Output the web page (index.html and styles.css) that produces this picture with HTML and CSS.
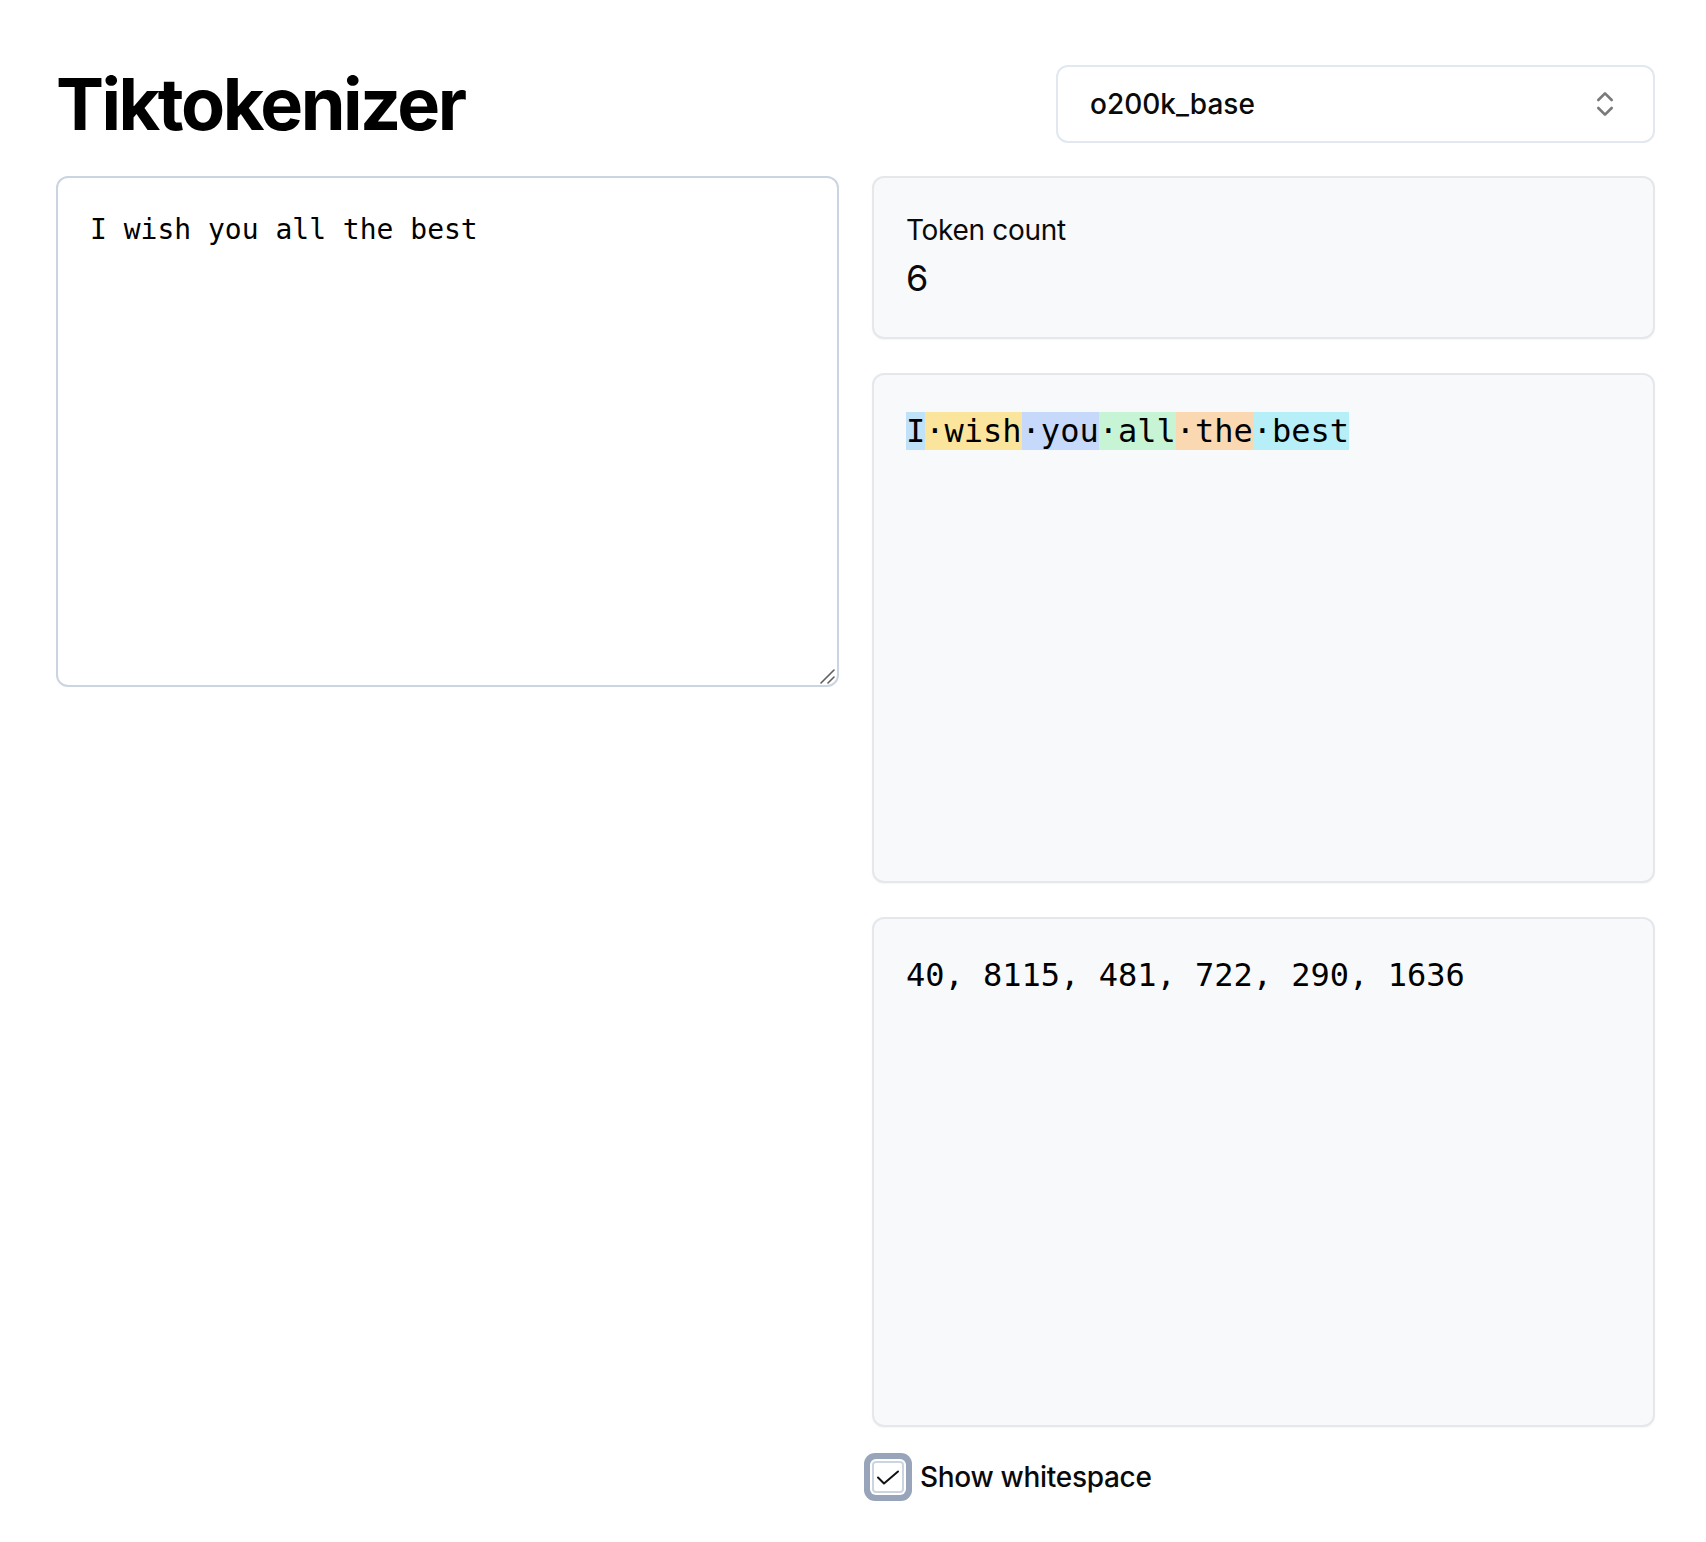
FILE: index.html
```html
<!DOCTYPE html>
<html lang="en">
<head>
<meta charset="utf-8">
<title>Tiktokenizer</title>
<link rel="stylesheet" href="styles.css">
</head>
<body>
<main class="page">
  <header class="header">
    <h1 class="title">Tiktokenizer</h1>
    <button class="select" type="button">
      <span class="select-value">o200k_base</span>
      <svg class="select-icon" viewBox="0 0 24 24" width="32" height="32" fill="none" stroke="currentColor" stroke-width="2" stroke-linecap="round" stroke-linejoin="round"><path d="m7 15 5 5 5-5"/><path d="m7 9 5-5 5 5"/></svg>
    </button>
  </header>
  <section class="grid">
    <div class="left">
      <textarea class="input" spellcheck="false">I wish you all the best</textarea>
      <svg class="grip" viewBox="0 0 16 16" width="16" height="16" fill="none" stroke="#5f5f5f" stroke-width="1.6" stroke-linecap="round"><path d="M2 15 L15 2"/><path d="M9 15 L15 9"/></svg>
    </div>
    <div class="right">
      <div class="panel count-panel">
        <div class="count-label">Token count</div>
        <div class="count-value">6</div>
      </div>
      <div class="panel tall mono"><span class="tk t1">I</span><span class="tk t2">·wish</span><span class="tk t3">·you</span><span class="tk t4">·all</span><span class="tk t5">·the</span><span class="tk t6">·best</span></div>
      <div class="panel tall mono">40, 8115, 481, 722, 290, 1636</div>
      <label class="check-row">
        <span class="checkbox"><svg viewBox="0 0 28 28" width="28" height="28" fill="none" stroke="#111" stroke-width="2" stroke-linecap="round" stroke-linejoin="round"><path d="M4 14.5 L10 20.5 L24 8.5"/></svg></span>
        <span class="check-label">Show whitespace</span>
      </label>
    </div>
  </section>
</main>
</body>
</html>
```

FILE: styles.css
```css
* { box-sizing: border-box; }
html, body { margin: 0; padding: 0; background: #fff; }
body {
  font-family: Inter, "Noto Sans", sans-serif;
  color: #0a0a0a;
}
.page {
  padding: 65px 51px 40px 56px;
  display: flex;
  flex-direction: column;
  gap: 33px;
}
.header {
  display: flex;
  align-items: center;
  justify-content: space-between;
}
.title {
  margin: 0;
  font-size: 72px;
  line-height: 72px;
  font-weight: 700;
  letter-spacing: -2.5px;
  color: #000;
}
.select {
  width: 599px;
  height: 78px;
  display: flex;
  align-items: center;
  justify-content: space-between;
  padding: 0 32px 0 32px;
  border: 2px solid #e2e8f0;
  border-radius: 12px;
  background: #fff;
  font-family: Inter, sans-serif;
  font-size: 28px;
  font-weight: 500;
  color: #0a0a0a;
  cursor: pointer;
}
.select-icon { color: #7a7a7a; }
.grid {
  display: grid;
  grid-template-columns: 783px 783px;
  column-gap: 33px;
  align-items: start;
}
.left { position: relative; }
.input {
  display: block;
  width: 100%;
  height: 511px;
  margin: 0;
  padding: 32px;
  border: 2px solid #cbd5e1;
  border-radius: 12px;
  background: #fff;
  font-family: "DejaVu Sans Mono", "Liberation Mono", monospace;
  font-size: 28px;
  line-height: 40px;
  color: #000;
  resize: none;
  outline: none;
}
.grip {
  position: absolute;
  right: 4px;
  bottom: 3px;
}
.right {
  display: flex;
  flex-direction: column;
  gap: 34px;
}
.panel {
  border: 2px solid #e5e7eb;
  border-radius: 12px;
  background: #f8f9fb;
  padding: 32px;
  box-shadow: 0 1px 2px rgba(0,0,0,0.04);
}
.count-panel { height: 163px; }
.count-label {
  font-size: 28px;
  line-height: 40px;
  letter-spacing: -0.3px;
  color: #0a0a0a;
}
.count-value {
  font-size: 36px;
  line-height: 56px;
  color: #0a0a0a;
}
.tall { height: 510px; }
.mono {
  font-family: "DejaVu Sans Mono", "Liberation Mono", monospace;
  font-size: 32px;
  line-height: 48px;
  color: #000;
  white-space: pre-wrap;
}
.t1 { background: #c0e2f9; }
.t2 { background: #fbe59c; }
.t3 { background: #c6d9fb; }
.t4 { background: #c8f4d6; }
.t5 { background: #f9d8b2; }
.t6 { background: #b6eff7; }
.check-row {
  display: flex;
  align-items: center;
  gap: 16px;
  height: 32px;
  margin-top: 0;
}
.checkbox {
  width: 32px;
  height: 32px;
  flex: none;
  display: flex;
  align-items: center;
  justify-content: center;
  border: 2px solid #cbd5e1;
  border-radius: 4px;
  background: #fff;
  box-shadow: 0 0 0 2px #fff, 0 0 0 8px #97a4b9;
}
.check-label {
  font-size: 28px;
  font-weight: 500;
  letter-spacing: -0.3px;
  color: #0a0a0a;
}
```
